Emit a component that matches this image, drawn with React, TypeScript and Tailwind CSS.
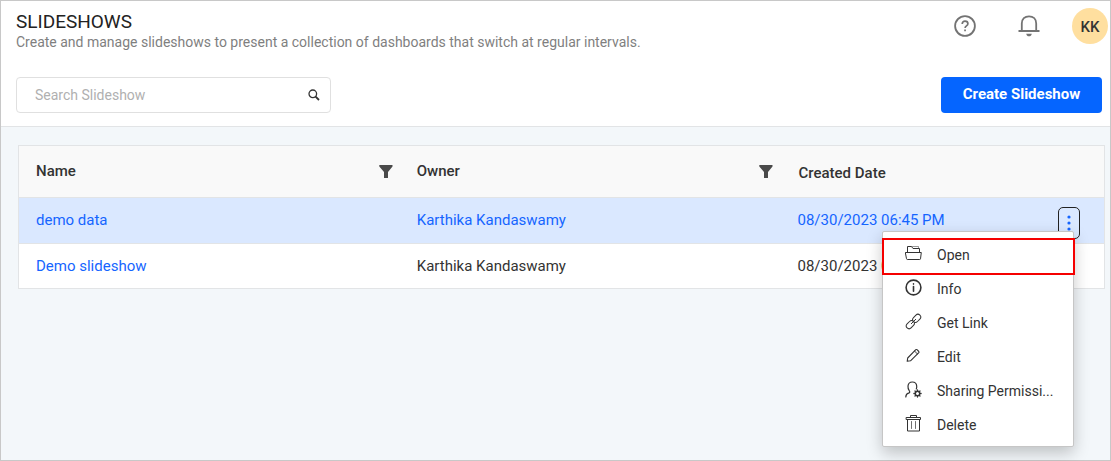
import type { ReactNode } from "react";

type Slideshow = { name: string; owner: string; created: string; active?: boolean };

const slideshows: Slideshow[] = [
  { name: "demo data", owner: "Karthika Kandaswamy", created: "08/30/2023 06:45 PM", active: true },
  { name: "Demo slideshow", owner: "Karthika Kandaswamy", created: "08/30/2023 06:44 PM" },
];

function MenuIcon({ children, strokeWidth = 1 }: { children: ReactNode; strokeWidth?: number }) {
  return (
    <svg
      className="size-[17px] shrink-0"
      viewBox="0 0 17 17"
      fill="none"
      stroke="#333"
      strokeWidth={strokeWidth}
      strokeLinejoin="round"
      strokeLinecap="round"
      aria-hidden="true"
    >
      {children}
    </svg>
  );
}

const menuItems: { label: string; icon: ReactNode; marked?: boolean }[] = [
  {
    label: "Open",
    marked: true,
    icon: (
      <MenuIcon>
        <path d="M.7 7.500h15.600l-.8 6.300q-.1.700-.8.700H2.300q-.7 0-.8-.7z" />
        <path d="M2.500 7.500v-6h4l1.500 2h6.500v4" />
        <path d="M7 1.500h6.500v2" strokeOpacity="0.5" />
      </MenuIcon>
    ),
  },
  {
    label: "Info",
    icon: (
      <MenuIcon strokeWidth={1.6}>
        <circle cx="8.500" cy="8.500" r="7.400" />
        <path d="M8.500 7.600v4.600M8.500 4.900v0.200" />
      </MenuIcon>
    ),
  },
  {
    label: "Get Link",
    icon: (
      <MenuIcon>
        <rect x="-2.800" y="-4.500" width="5.600" height="9" rx="2.800" transform="translate(11.700 5.300) rotate(45)" />
        <rect x="-2.800" y="-4.500" width="5.600" height="9" rx="2.800" transform="translate(5.300 11.700) rotate(45)" />
        <path d="M6.300 10.700l4.400-4.400" />
      </MenuIcon>
    ),
  },
  {
    label: "Edit",
    icon: (
      <MenuIcon strokeWidth={1.1}>
        <path d="M2.700 11L10.800 2.700q.6-.5 1.200 0l1.800 1.800q.5.600 0 1.200L5.500 13.800l-3.300.500z" />
        <path d="M9.500 4l3 3" strokeOpacity="0.6" />
      </MenuIcon>
    ),
  },
  {
    label: "Sharing Permissi...",
    icon: (
      <MenuIcon strokeWidth={1.2}>
        <path d="M.8 16c.1-2.200 1-3.300 2.800-3.800 1.200-.4 1.500-1.200.8-2.200C3.200 8.400 2.800 7 3 5c.3-2.500 2-4 4.300-4s4.200 1.500 4.400 4c.1 1.200 0 2-.4 3" />
        <circle cx="12.500" cy="12.500" r="2.200" strokeWidth="1.400" />
        <path d="M12.500 8.900v1M12.500 15.100v1M8.900 12.500h1M15.100 12.500h1M10 10l.7.7M14.300 14.300l.7.7M10 15l.7-.7M14.300 10.700l.7-.7" strokeWidth="1.300" />
      </MenuIcon>
    ),
  },
  {
    label: "Delete",
    icon: (
      <MenuIcon>
        <path d="M1.500 2.500h14v2h-14zM5.500 2.500v-2h6v2" />
        <path d="M2.500 4.500v11.500h12V4.500" />
        <path d="M6.500 6.500v7M10.500 6.500v7" strokeOpacity="0.7" />
      </MenuIcon>
    ),
  },
];

function FilterButton({ label }: { label: string }) {
  return (
    <button type="button" aria-label={label}>
      <svg className="h-[13px] w-[14px]" viewBox="0 0 14 13" fill="#4a4a4a" aria-hidden="true">
        <path d="M.3 0h13.200v1.500L9 7v6H5V7L.3 1.500z" />
      </svg>
    </button>
  );
}

function RowMenu() {
  return (
    <ul
      role="menu"
      className="absolute top-6 right-[6px] z-10 w-[192px] rounded-xs border border-[#c6c6c6] bg-white py-[5px] shadow-[0_6px_16px_rgba(0,0,0,0.22)]"
    >
      {menuItems.map((item) => (
        <li key={item.label} role="none" className="relative">
          <button
            type="button"
            role="menuitem"
            className="flex h-[34px] w-full items-center gap-[15px] pr-4 pl-[22px] text-left text-sm text-[#333]"
          >
            {item.icon}
            <span className="pt-[2px] whitespace-nowrap">{item.label}</span>
          </button>
          {item.marked && (
            <span className="pointer-events-none absolute top-px -right-[2px] -bottom-1 -left-px border-2 border-[#f50000]" />
          )}
        </li>
      ))}
    </ul>
  );
}

export default function App() {
  return (
    <div className="flex min-h-screen flex-col border border-[#c8c8c8] bg-[#f3f7fa] font-[Roboto,sans-serif] text-[#333]">
      <header className="border-b border-[#e2e4e6] bg-white pb-[13px]">
        <div className="flex items-start justify-between pr-[2px] pl-[15px]">
          <div className="pt-[9px]">
            <h1 className="text-[19px] leading-6 font-normal text-[#222]">SLIDESHOWS</h1>
            <p className="text-sm leading-4 text-[#7f7f7f]">
              Create and manage slideshows to present a collection of dashboards that switch at regular intervals.
            </p>
          </div>
          <div className="flex items-center pt-[7px]">
            <button type="button" aria-label="Help">
              <svg className="size-[22px]" viewBox="0 0 22 22" fill="none" stroke="#737373" aria-hidden="true">
                <circle cx="11" cy="11" r="9.900" strokeWidth="1.800" />
                <path d="M8.200 8.900c0-1.700 1.200-2.700 2.800-2.700s2.900 1 2.900 2.600c0 2.100-2.800 2.100-2.800 4.100" strokeWidth="1.700" />
                <path d="M10.200 15.300h1.700" strokeWidth="1.700" />
              </svg>
            </button>
            <button type="button" aria-label="Notifications" className="ml-[42px]">
              <svg className="size-[22px]" viewBox="0 0 22 22" fill="none" stroke="#737373" aria-hidden="true">
                <path d="M.5 16h21M3.800 16V8.500C3.800 4 6.800 1.300 11 1.300S18.200 4 18.200 8.500V16" strokeWidth="1.800" />
                <path d="M8.200 18.700h5.600c-.5 1.900-1.400 2.600-2.800 2.600s-2.300-.7-2.800-2.600z" fill="#737373" stroke="none" />
              </svg>
            </button>
            <button
              type="button"
              aria-label="Account"
              className="ml-8 flex size-9 items-center justify-center rounded-full bg-[#ffdf9f] pt-[2px] text-[15px] font-medium text-[#333]"
            >
              KK
            </button>
          </div>
        </div>
        <div className="mt-[27px] flex items-center justify-between pr-2 pl-[15px]">
          <label className="flex h-9 w-[315px] items-center rounded-[4px] border border-[#e0e0e0] pr-[10px] pl-[18px]">
            <input
              type="text"
              aria-label="Search Slideshow"
              placeholder="Search Slideshow"
              className="min-w-0 flex-1 text-sm outline-none placeholder:text-[#b0b0b0]"
            />
            <svg className="size-3" viewBox="0 0 12 12" fill="none" stroke="#333" aria-hidden="true">
              <circle cx="4.800" cy="4.800" r="3.800" strokeWidth="1.300" />
              <path d="M7.600 7.600l3.400 3.400" strokeWidth="1.800" />
            </svg>
          </label>
          <button type="button" className="h-9 w-[161px] rounded-[4px] bg-[#0565ff] pb-[2px] text-[15px] font-bold text-white">
            Create Slideshow
          </button>
        </div>
      </header>

      <main className="pt-[18px] pr-[5px] pl-[17px]">
        <div className="border border-[#e2e4e6] bg-white">
          <table className="w-full table-fixed border-collapse text-left text-[15px]">
            <thead className="bg-[#f9f9f9]">
              <tr className="h-[51px] border-b border-[#e2e4e6]">
                <th scope="col" className="w-[35%] pr-[6px] pl-[17px] font-medium">
                  <div className="flex items-center justify-between">
                    Name
                    <FilterButton label="Filter by name" />
                  </div>
                </th>
                <th scope="col" className="w-[35%] pr-[6px] pl-[18px] font-medium">
                  <div className="flex items-center justify-between">
                    Owner
                    <FilterButton label="Filter by owner" />
                  </div>
                </th>
                <th scope="col" className="w-[30%] pt-1 pl-5 font-medium">
                  Created Date
                </th>
              </tr>
            </thead>
            <tbody>
              {slideshows.map((row) => (
                <tr
                  key={row.name}
                  className={
                    row.active
                      ? "h-[46px] border-b border-[#e2e4e6] bg-[#dae8ff] text-[#1565ff]"
                      : "h-[45px]"
                  }
                >
                  <td className="pl-[17px]">
                    <a href="#slideshow" className="text-[#1565ff]">
                      {row.name}
                    </a>
                  </td>
                  <td className="pl-[18px]">{row.owner}</td>
                  <td className="pl-[19px]">
                    <div className="flex items-center justify-between pr-6">
                      {row.created}
                      {row.active && (
                        <div className="relative mt-[5px]">
                          <button
                            type="button"
                            aria-label="Row actions"
                            className="flex h-8 w-[22px] items-center justify-center rounded-[5px] border border-[#222]"
                          >
                            <svg className="h-4 w-1" viewBox="0 0 4 16" fill="#1565ff" aria-hidden="true">
                              <circle cx="2" cy="2" r="1.600" />
                              <circle cx="2" cy="8" r="1.600" />
                              <circle cx="2" cy="14" r="1.600" />
                            </svg>
                          </button>
                          <RowMenu />
                        </div>
                      )}
                    </div>
                  </td>
                </tr>
              ))}
            </tbody>
          </table>
        </div>
      </main>
    </div>
  );
}
